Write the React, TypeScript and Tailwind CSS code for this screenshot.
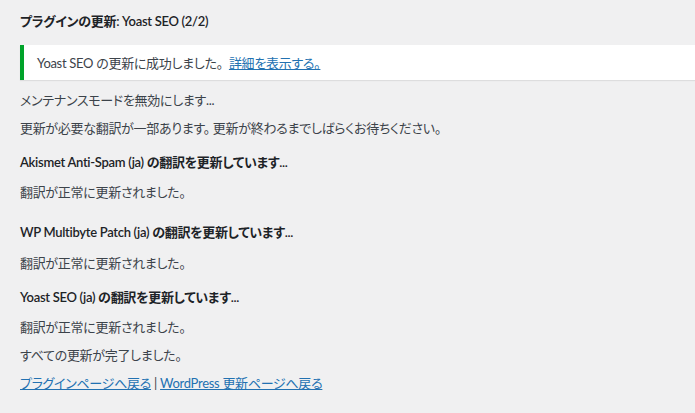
import * as React from "react";

const translations = [
    { name: "Akismet Anti-Spam (ja)", gap: "mt-[14px]", after: "mt-[10px]" },
    { name: "WP Multibyte Patch (ja)", gap: "mt-5", after: "mt-[11px]" },
    { name: "Yoast SEO (ja)", gap: "mt-[14px]", after: "mt-[10px]" },
];

export default function App() {
    return (
        <div className="min-h-[413px] w-full overflow-hidden bg-[#f0f0f1] pl-5 pt-[11px] text-[13px] leading-5 text-[#3c434a] [font-family:Lato,'Noto_Sans_CJK_JP',sans-serif] [font-feature-settings:'palt'] tracking-[-0.3px]">
            <h1 className="font-semibold text-[#1d2327]">
                プラグインの更新: Yoast SEO (2/2)
            </h1>

            <div className="mt-[14px] flex h-[35px] items-center border-l-4 border-[#00a32a] bg-white pl-[13px] shadow-[0_1px_1px_rgba(0,0,0,0.08)]">
                <p>
                    Yoast SEO の更新に成功しました。&nbsp;&nbsp;
                    <a href="#" className="text-[#2271b1] underline">
                        詳細を表示する。
                    </a>
                </p>
            </div>

            <p className="mt-[10px]">メンテナンスモードを無効にします...</p>
            <p className="mt-2">
                更新が必要な翻訳が一部あります。 更新が終わるまでしばらくお待ちください。
            </p>

            {translations.map((t) => (
                <div key={t.name}>
                    <h2 className={`${t.gap} font-semibold text-[#1d2327]`}>
                        {t.name} の翻訳を更新しています...
                    </h2>
                    <p className={t.after}>翻訳が正常に更新されました。</p>
                </div>
            ))}

            <p className="mt-2">すべての更新が完了しました。</p>
            <p className="mt-2">
                <a href="#" className="text-[#2271b1] underline">
                    プラグインページへ戻る
                </a>{" "}
                |{" "}
                <a href="#" className="text-[#2271b1] underline">
                    WordPress 更新ページへ戻る
                </a>
            </p>
        </div>
    );
}
